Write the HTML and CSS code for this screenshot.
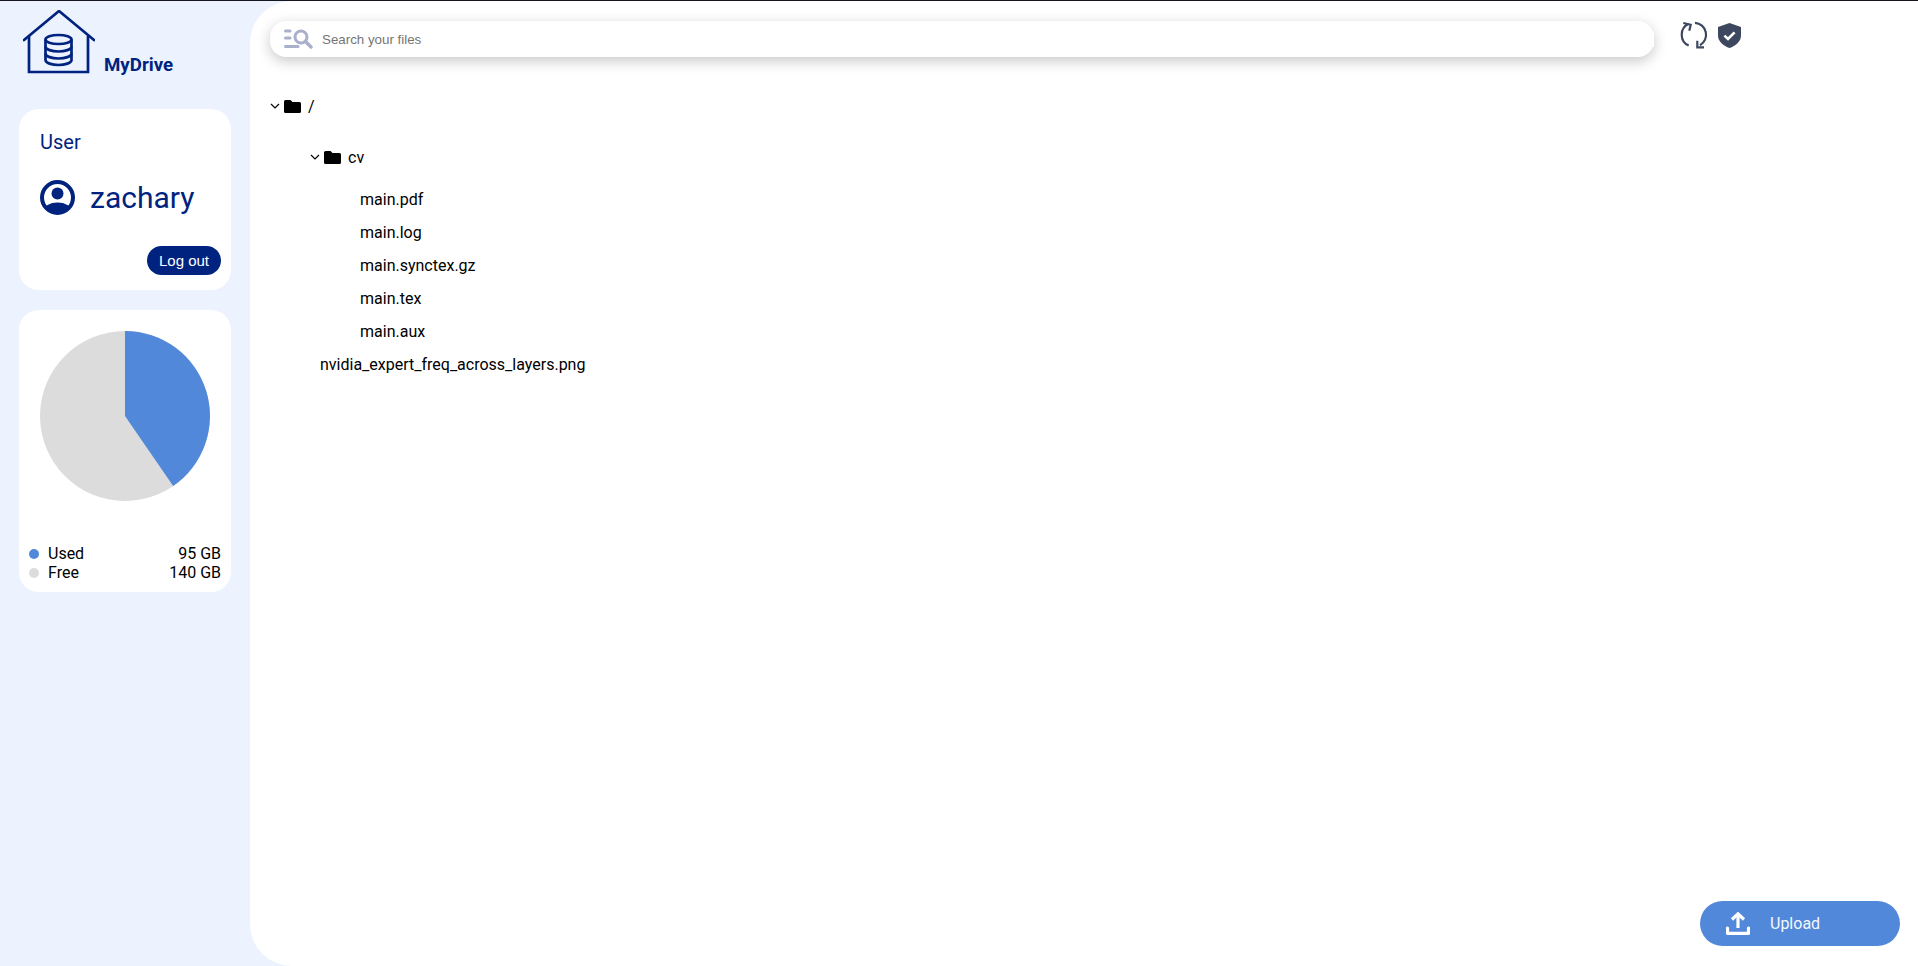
FILE: index.html
```html
<!DOCTYPE html>
<html>

<head>
  <meta charset="utf-8" />
  <title>MyDrive</title>
  <link rel="stylesheet" href="styles.css">
</head>

<body>
  <div class="app">
    <div class="sidebar">
      <div class="brand">
        <svg class="logo" viewBox="0 0 72 64" fill="none" stroke="#00237f" stroke-width="2.7">
          <path d="M1 30 L36 1 L71 30" stroke-linejoin="round" stroke-linecap="round" />
          <path d="M6 26 V62 H65 V26" />
          <ellipse cx="35.5" cy="29.5" rx="13" ry="4.5" />
          <path d="M22.5 29.5 V50 C22.5 53 29 55 35.5 55 C42 55 48.5 53 48.5 50 V29.5" />
          <path d="M22.5 36.5 C22.5 39.5 29 41.5 35.5 41.5 C42 41.5 48.5 39.5 48.5 36.5" />
          <path d="M22.5 43.5 C22.5 46.5 29 48.5 35.5 48.5 C42 48.5 48.5 46.5 48.5 43.5" />
        </svg>
        <span class="brand-name">MyDrive</span>
      </div>

      <div class="card user-card">
        <div class="user-label">User</div>
        <div class="user-row">
          <svg class="user-icon" viewBox="0 0 35 35">
            <defs>
              <clipPath id="userClip">
                <circle cx="17.5" cy="17.5" r="15" />
              </clipPath>
            </defs>
            <circle cx="17.5" cy="17.5" r="15.5" fill="none" stroke="#00237f" stroke-width="4" />
            <circle cx="17.5" cy="13.5" r="6" fill="#00237f" />
            <ellipse cx="17.5" cy="31" rx="14" ry="8.5" fill="#00237f" clip-path="url(#userClip)" />
          </svg>
          <span class="user-name">zachary</span>
        </div>
        <div class="logout-row"><button class="logout">Log out</button></div>
      </div>

      <div class="card usage-card">
        <svg class="pie" viewBox="0 0 170 170">
          <circle cx="85" cy="85" r="85" fill="#dcdcdc" />
          <path d="M85 85 V0 A85 85 0 0 1 133.2 155 Z" fill="#5288d9" />
        </svg>
        <div class="legend">
          <div class="legend-row"><i class="dot used"></i><span class="legend-name">Used</span><span>95 GB</span></div>
          <div class="legend-row"><i class="dot free"></i><span class="legend-name">Free</span><span>140 GB</span></div>
        </div>
      </div>
    </div>

    <div class="main">
      <div class="topbar">
        <div class="search">
          <svg class="search-icon" viewBox="0 0 29 20" fill="none" stroke="#a9b0cb" stroke-width="3" stroke-linecap="round">
            <path d="M1.5 2 H6" />
            <path d="M1.5 9 H6" />
            <path d="M1.5 17.5 H14" />
            <circle cx="17" cy="8" r="6" />
            <path d="M21.5 12.5 L27 18" stroke-width="3.4" />
          </svg>
          <input type="text" placeholder="Search your files" />
        </div>
        <svg class="sync-icon" viewBox="0 0 28 28" fill="none" stroke="#3e4760" stroke-width="2.2">
          <path d="M8.7 2.8 A12 12 0 0 0 8.7 24.6" />
          <path d="M15 1.8 A12 12 0 0 1 20 24.2" />
          <path d="M3.3 2 L10.7 3.7 L9.3 9.7" />
          <path d="M17.3 19.7 V26.3 H24" />
        </svg>
        <svg class="shield-icon" viewBox="0 0 23 25">
          <path d="M11.5 0 L23 4 V12.5 C23 18.5 17.5 23 11.5 25 C5.5 23 0 18.5 0 12.5 V4 Z" fill="#3e4760" />
          <path d="M6.4 12.6 L10 16 L16.6 9.4" fill="none" stroke="#fff" stroke-width="2.6" />
        </svg>
      </div>

      <div class="tree">
        <div class="folder">
          <svg class="chevron" viewBox="0 0 10 6" fill="none" stroke="#000" stroke-width="1.2"><path d="M1 1 L5 5 L9 1" /></svg>
          <svg class="folder-icon" viewBox="0 0 17 13"><path d="M1.5 0 H6.5 L8.5 2 H15.5 A1.5 1.5 0 0 1 17 3.5 V11.5 A1.5 1.5 0 0 1 15.5 13 H1.5 A1.5 1.5 0 0 1 0 11.5 V1.5 A1.5 1.5 0 0 1 1.5 0 Z" /></svg>
          <span>/</span>
        </div>
        <div class="nested">
          <div class="folder sub">
            <svg class="chevron" viewBox="0 0 10 6" fill="none" stroke="#000" stroke-width="1.2"><path d="M1 1 L5 5 L9 1" /></svg>
            <svg class="folder-icon" viewBox="0 0 17 13"><path d="M1.5 0 H6.5 L8.5 2 H15.5 A1.5 1.5 0 0 1 17 3.5 V11.5 A1.5 1.5 0 0 1 15.5 13 H1.5 A1.5 1.5 0 0 1 0 11.5 V1.5 A1.5 1.5 0 0 1 1.5 0 Z" /></svg>
            <span>cv</span>
          </div>
          <div class="files">
            <div class="file">main.pdf</div>
            <div class="file">main.log</div>
            <div class="file">main.synctex.gz</div>
            <div class="file">main.tex</div>
            <div class="file">main.aux</div>
          </div>
          <div class="file">nvidia_expert_freq_across_layers.png</div>
        </div>
      </div>

      <button class="upload">
        <svg class="upload-icon" viewBox="0 0 24 23" fill="none" stroke="#fff" stroke-width="3.2">
          <path d="M1.5 16 V21.3 H22.5 V16" stroke-linejoin="round" stroke-linecap="round" />
          <path d="M12 16 V2" />
          <path d="M6 7.5 L12 1.8 L18 7.5" />
        </svg>
        <span>Upload</span>
      </button>
    </div>
  </div>
</body>

</html>
```

FILE: styles.css
```css
html,
body {
  margin: 0;
  height: 100%;
  background-color: #ecf3ff;
  font-family: Roboto, sans-serif;
}

.app {
  display: flex;
  height: 966px;
  border-top: 1px solid #16161e;
  box-sizing: border-box;
  overflow: hidden;
}

.sidebar {
  width: 250px;
  flex-shrink: 0;
  padding: 0 19px;
  box-sizing: border-box;
}

.brand {
  display: flex;
  align-items: flex-end;
  height: 108px;
  padding: 8px 0 0 4px;
  box-sizing: border-box;
}

.logo {
  width: 72px;
  height: 64px;
  margin-bottom: 35px;
}

.brand-name {
  margin: 0 0 33px 9px;
  font-size: 18.72px;
  font-weight: 700;
  line-height: 21px;
  color: #00237f;
}

.card {
  width: 212px;
  background-color: white;
  border-radius: 20px;
  box-sizing: border-box;
}

.user-card {
  height: 181px;
  padding: 21px 10px 0 21px;
  color: #00237f;
}

.user-label {
  font-size: 20px;
  line-height: 24px;
}

.user-row {
  display: flex;
  align-items: center;
  gap: 15px;
  margin-top: 26px;
}

.user-icon {
  width: 35px;
  height: 35px;
}

.user-name {
  font-size: 30px;
  line-height: 35px;
}

.logout-row {
  display: flex;
  justify-content: flex-end;
  margin-top: 31px;
}

.logout {
  width: 74px;
  height: 29px;
  padding: 0;
  border: none;
  border-radius: 15px;
  background-color: #00237f;
  color: white;
  font-family: "Liberation Sans", sans-serif;
  font-size: 15px;
}

.usage-card {
  height: 282px;
  margin-top: 20px;
  padding: 21px 10px 0;
}

.pie {
  display: block;
  width: 170px;
  height: 170px;
  margin-left: 11px;
}

.legend {
  margin-top: 43px;
  font-size: 16px;
  line-height: 19px;
}

.legend-row {
  display: flex;
  align-items: center;
}

.legend-name {
  flex: 1;
}

.dot {
  width: 10px;
  height: 10px;
  margin-right: 9px;
  border-radius: 50%;
}

.dot.used {
  background-color: #5288d9;
}

.dot.free {
  background-color: #dcdcdc;
}

.main {
  position: relative;
  flex: 1;
  background-color: white;
  border-radius: 42px 0 0 42px;
  padding-left: 20px;
}

.topbar {
  display: flex;
  align-items: center;
  padding-top: 20px;
  height: 36px;
}

.search {
  display: flex;
  align-items: center;
  width: 1384px;
  height: 36px;
  padding-left: 14px;
  box-sizing: border-box;
  border-radius: 16px;
  background-color: white;
  box-shadow: 0 4px 14px rgba(0, 0, 0, 0.22);
}

.search-icon {
  width: 29px;
  height: 20px;
}

.search input {
  flex: 1;
  margin-left: 9px;
  padding: 0;
  border: none;
  outline: none;
  font-family: "Liberation Sans", sans-serif;
  font-size: 13.33px;
}

.search input::placeholder {
  color: #757575;
}

.sync-icon {
  width: 28px;
  height: 28px;
  margin: 0 0 8px 26px;
}

.shield-icon {
  width: 23px;
  height: 25px;
  margin: 0 0 8px 10px;
}

.tree {
  padding-top: 33px;
  font-size: 16px;
  color: black;
}

.folder {
  display: flex;
  align-items: center;
  height: 32px;
}

.folder.sub {
  margin-left: 40px;
}

.chevron {
  width: 10px;
  height: 6px;
  margin-right: 4px;
}

.folder-icon {
  width: 17px;
  height: 13px;
  margin-right: 7px;
  fill: black;
}

.nested {
  padding-top: 19px;
}

.files {
  padding-top: 10px;
  margin-left: 90px;
}

.file {
  height: 33px;
  line-height: 33px;
}

.nested > .file {
  margin-left: 50px;
}

.upload {
  position: absolute;
  right: 18px;
  bottom: 20px;
  display: flex;
  align-items: center;
  width: 200px;
  height: 45px;
  padding: 0 0 0 26px;
  border: none;
  border-radius: 23px;
  background-color: #5288d9;
  color: #f4f7fc;
  font-family: Roboto, sans-serif;
  font-size: 16px;
  box-sizing: border-box;
}

.upload-icon {
  width: 24px;
  height: 23px;
  margin-right: 20px;
}
```
